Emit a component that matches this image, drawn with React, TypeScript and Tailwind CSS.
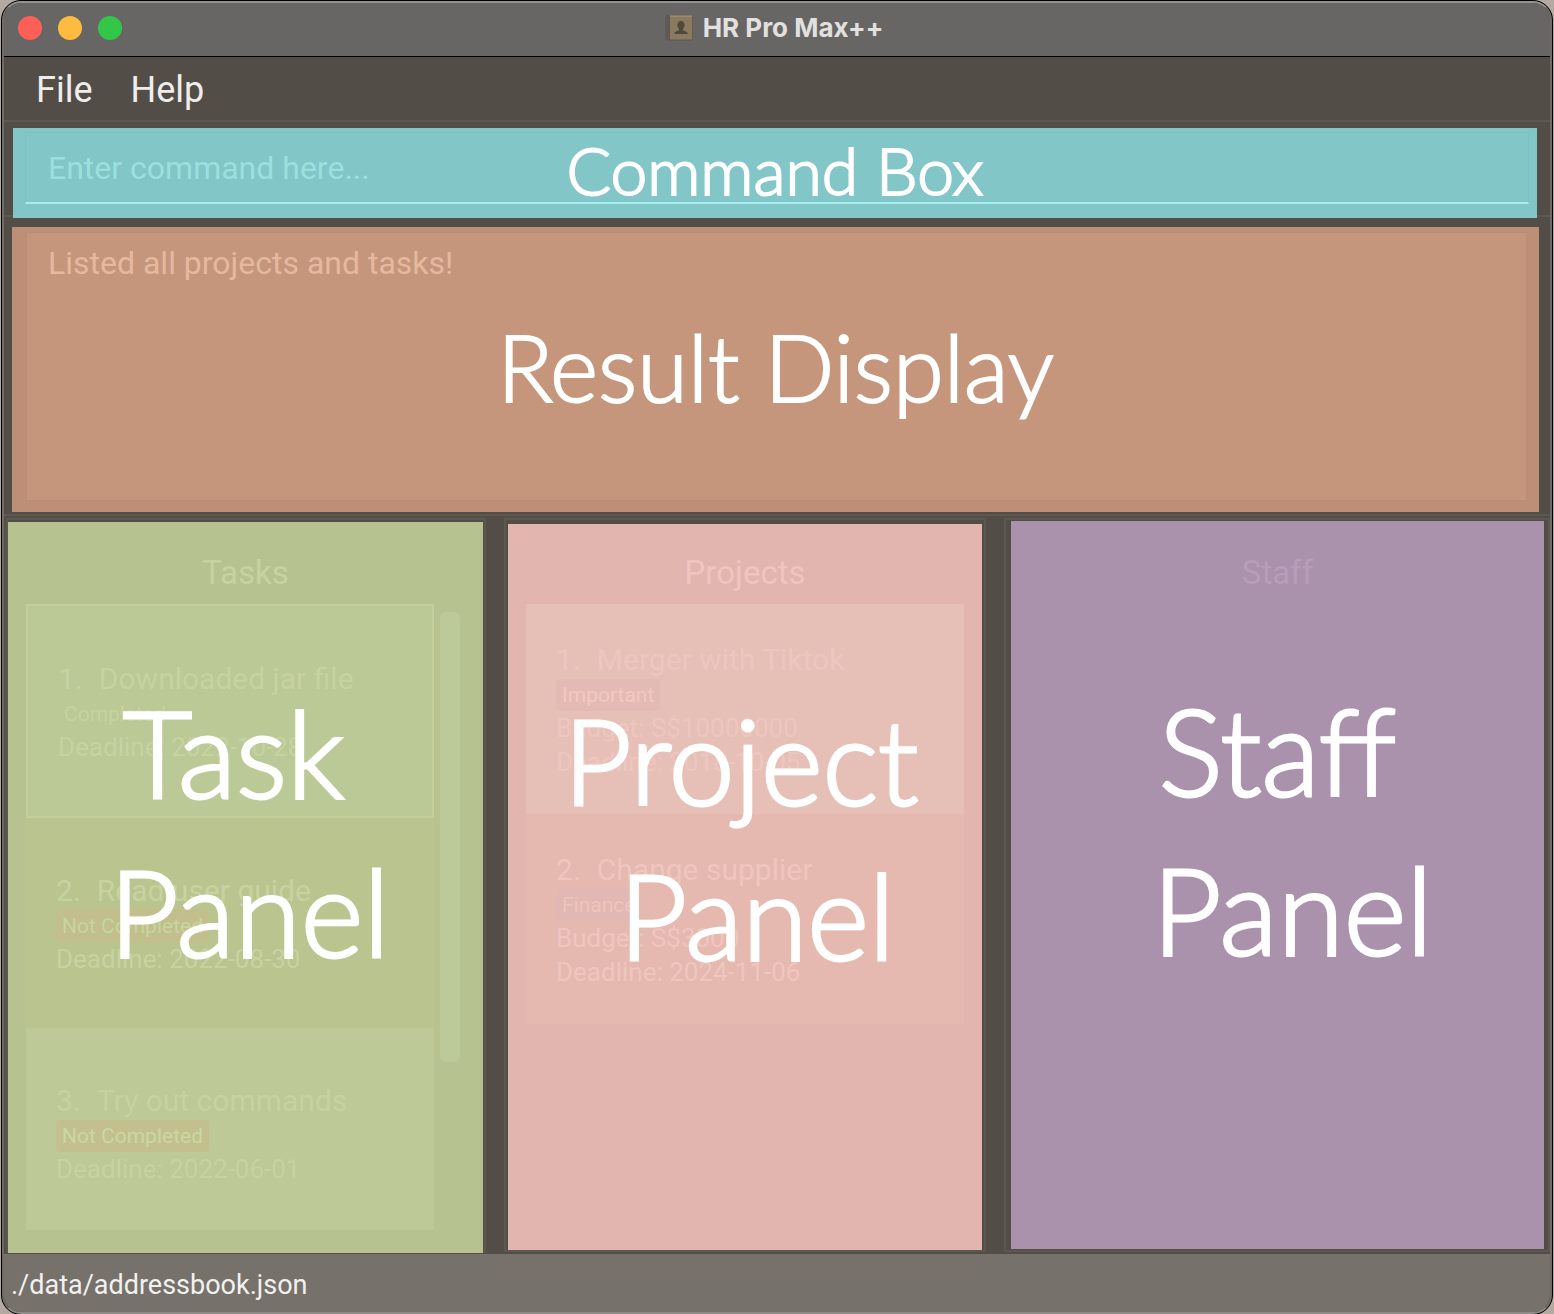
import React from 'react'

type Item = {
  id: number
  name: string
  tag: string
  tagClass: string
  lines: string[]
}

const tasks: Item[] = [
  { id: 1, name: 'Downloaded jar file', tag: 'Completed', tagClass: '', lines: ['Deadline: 2022-10-28'] },
  { id: 2, name: 'Read user guide', tag: 'Not Completed', tagClass: 'bg-[#c3bf8c] text-[#c5d69f]', lines: ['Deadline: 2022-08-30'] },
  { id: 3, name: 'Try out commands', tag: 'Not Completed', tagClass: 'bg-[#c3c08e] text-[#c8d8a1]', lines: ['Deadline: 2022-06-01'] },
]

const projects: Item[] = [
  { id: 1, name: 'Merger with Tiktok', tag: 'Important', tagClass: 'bg-[#e4bbb4] text-[#f3c8c1]', lines: ['Budget: S$10000000', 'Deadline: 2018-10-05'] },
  { id: 2, name: 'Change supplier', tag: 'Finance', tagClass: 'bg-[#e1b8b3] text-[#f0c4bd]', lines: ['Budget: S$3000', 'Deadline: 2024-11-06'] },
]

const taskCard = [
  'min-h-[214px] border-2 border-[#c3cf9c] bg-[#bbc996]',
  'min-h-[210px] bg-[#bac48f]',
  'min-h-[202px] bg-[#bdc997]',
]
const projectCard = ['min-h-[210px] bg-[#e6c0b7]', 'min-h-[210px] bg-[#e5b9b0]']

function Card({ item, className }: { item: Item; className: string }) {
  return (
    <li className={`px-[30px] ${className}`}>
      <h3 className="flex gap-4 text-[30px] leading-[38px]">
        <span>{item.id}.</span>
        <span>{item.name}</span>
      </h3>
      <p className={`w-fit rounded-[4px] px-1.5 text-[21px] leading-8 ${item.tagClass}`}>{item.tag}</p>
      {item.lines.map((line) => (
        <p key={line} className="text-[26px] leading-[34px]">
          {line}
        </p>
      ))}
    </li>
  )
}

function Overlay({ children, className }: { children: React.ReactNode; className: string }) {
  return (
    <div
      className={`pointer-events-none absolute inset-0 text-center font-['Lato',sans-serif] font-light whitespace-pre text-white ${className}`}
    >
      {children}
    </div>
  )
}

function BookIcon() {
  return (
    <svg width="28" height="28" viewBox="0 0 28 28" aria-hidden="true">
      <rect x="0.5" y="1" width="27" height="25.5" rx="1.5" fill="#5f5852" />
      <rect x="1" y="1" width="4" height="25" fill="#625853" />
      <rect x="5" y="1.5" width="22" height="24" fill="#8b7a5d" />
      <rect x="5" y="1.5" width="22" height="1.5" fill="#988b73" />
      <path
        d="M16 7c2.300 0 3.600 1.700 3.600 4 0 1.600-.7 3-1.700 3.900v1.300c1.800.8 4.600 1.300 5.100 3.800H9c.5-2.500 3.300-3 5.100-3.800v-1.300c-1-.9-1.700-2.300-1.700-3.900 0-2.300 1.300-4 3.600-4z"
        fill="#51493f"
      />
    </svg>
  )
}

export default function App() {
  return (
    <div className="min-h-screen bg-[#b5aaa1] px-px font-['Roboto',sans-serif]">
      <div className="flex min-h-screen flex-col overflow-hidden rounded-[20px] border border-black bg-[#534d48]">
        <div className="flex grow flex-col overflow-hidden rounded-[19px] border-2 border-[#6f6b67] border-t-[#949391] border-b-[#8f8a86]">
          <header className="relative flex h-[54px] items-center justify-center gap-2.5 border-b border-black bg-[#676664] pr-1.5 pb-1">
            <div className="absolute left-3.5 flex gap-4">
              <button aria-label="Close" className="size-6 rounded-full bg-[#fe5f57]" />
              <button aria-label="Minimize" className="size-6 rounded-full bg-[#febb3f]" />
              <button aria-label="Zoom" className="size-6 rounded-full bg-[#33c748]" />
            </div>
            <BookIcon />
            <h1 className="font-['Inter',sans-serif] text-[26px] leading-8 font-bold text-[#e2e1e0]">HR Pro Max++</h1>
          </header>

          <nav className="flex h-[65px] items-center gap-[38px] border-b-2 border-[#5d5752] px-8 pt-0.5 text-[36px] text-[#eeedec]">
            <button>File</button>
            <button>Help</button>
          </nav>

          <section className="border-b-2 border-[#5d5752] pt-1.5 pr-[13px] pl-[9px]">
            <div className="relative -mb-[3px] bg-[#82c6c7] pt-1 pr-2 pb-3.5 pl-3">
              <input
                aria-label="Command"
                placeholder="Enter command here..."
                className="block h-[72px] w-full border-x border-t border-b-2 border-[#7fc1c2] border-b-[#a4eeef] bg-transparent px-[22px] text-[32px] text-[#9ae0df] outline-none placeholder:text-[#9ae0df]"
              />
              <Overlay className="text-[66px] leading-[84px] [-webkit-text-stroke:2px_white]">Command Box</Overlay>
            </div>
          </section>

          <section className="border-b-2 border-[#5d5752] pt-[10px] pr-[11px] pb-0.5 pl-2">
            <div className="relative bg-[#be8f77] pt-[5px] pr-3 pb-[11px] pl-[14px]">
              <p className="min-h-[269px] border border-[#bb8d76] bg-[#c5967c] px-[21px] pt-2.5 text-[32px] leading-10 text-[#e5b89f]">
                Listed all projects and tasks!
              </p>
              <Overlay className="text-[92px] leading-[280px] [-webkit-text-stroke:2px_white]">Result Display</Overlay>
            </div>
          </section>

          <main className="grid grow grid-cols-[480fr_482fr_546fr] gap-[18px] pt-0.5 pr-0 pb-0.5 pl-0.5">
            <section className="-mb-px flex flex-col border-2 border-b-0 border-[#5d5752] pt-0.5 pr-px">
              <div className="relative grow bg-[#b6c391] pt-[31px] pb-[23px] pl-[18px] text-[#c6d3a1]">
                <h2 className="pr-[18px] text-center text-[33px] leading-10">Tasks</h2>
                <div className="mt-[11px] flex gap-1.5 pr-[23px]">
                  <ul className="grow">
                    {tasks.map((t, i) => (
                      <Card key={t.id} item={t} className={`${taskCard[i]} pt-[54px]`} />
                    ))}
                  </ul>
                  <div className="mt-2 h-[450px] w-5 rounded-md bg-[#bcc998]" />
                </div>
                <Overlay className="pt-[151px] text-[120px] leading-[159px] [-webkit-text-stroke:3px_white]">
                  <div className="pr-[24px]">Task</div>
                  <div className="pl-2">Panel</div>
                </Overlay>
              </div>
            </section>

            <section className="flex flex-col border-2 border-[#5d5752] px-0.5 pt-1">
              <div className="relative grow bg-[#e2b5af] px-[18px] pt-[29px] text-[#efc6bf]">
                <h2 className="text-center text-[33px] leading-10">Projects</h2>
                <ul className="mt-[11px]">
                  {projects.map((p, i) => (
                    <Card key={p.id} item={p} className={`${projectCard[i]} pt-[37px]`} />
                  ))}
                </ul>
                <Overlay className="pt-[158px] text-[118px] leading-[155px] [-webkit-text-stroke:3px_white]">
                  <div className="pr-2">Project</div>
                  <div className="pl-[24px]">Panel</div>
                </Overlay>
              </div>
            </section>

            <section className="flex flex-col border-2 border-[#5d5752] pt-px pr-1 pb-px pl-[5px]">
              <div className="relative grow bg-[#ab92ac] pt-8 text-[#b79dba]">
                <h2 className="text-center text-[33px] leading-10">Staff</h2>
                <Overlay className="pt-[150px] text-[120px] leading-[159px] [-webkit-text-stroke:3px_white]">
                  <div>Staff</div>
                  <div className="pl-[30px]">Panel</div>
                </Overlay>
              </div>
            </section>
          </main>

          <footer className="flex h-[58px] items-center bg-[#76716a] px-[7px] pt-1 text-[27px] text-[#f1f1f0]">
            <p>./data/addressbook.json</p>
          </footer>
        </div>
      </div>
    </div>
  )
}
